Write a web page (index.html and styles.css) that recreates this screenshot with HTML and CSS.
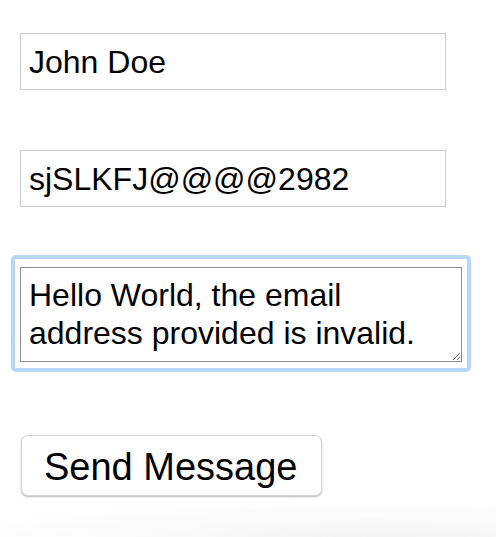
FILE: index.html
```html
<!DOCTYPE html>
<html lang="en">
<head>
<meta charset="utf-8">
<title>Contact form</title>
<link rel="stylesheet" href="styles.css">
</head>
<body>
<form class="contact-form">
  <input class="field" type="text" value="John Doe">
  <input class="field field-email" type="text" value="sjSLKFJ@@@@2982">
  <div class="focus-ring">
    <textarea class="message" rows="2">Hello World, the email address provided is invalid.</textarea>
  </div>
  <button class="send" type="button">Send Message</button>
</form>
<div class="window-shadow"></div>
</body>
</html>
```

FILE: styles.css
```css
html, body {
  margin: 0;
  padding: 0;
  background: #ffffff;
}

body {
  width: 496px;
  height: 537px;
  overflow: hidden;
  position: relative;
  font-family: "Liberation Sans", Arial, Helvetica, sans-serif;
  color: #000;
}

.contact-form {
  display: flex;
  flex-direction: column;
  align-items: flex-start;
  padding: 33px 0 0 11px;
}

.field {
  box-sizing: border-box;
  width: 426px;
  height: 57px;
  margin: 0 0 0 9px;
  padding: 2px 7px 0 8px;
  border: 1px solid #cccccc;
  border-radius: 0;
  background: #fff;
  font-family: inherit;
  font-size: 32px;
  color: #000;
  outline: none;
}

.field + .field {
  margin-top: 60px;
}

.focus-ring {
  margin-top: 48px;
  padding: 8px 5px 6px 5px;
  border: 4px solid #b6d6fb;
  border-radius: 5px;
  display: flex;
}

.message {
  box-sizing: border-box;
  width: 442px;
  height: 95px;
  margin: 0;
  padding: 8px 8px 9px 8px;
  border: 1px solid #8c8c8c;
  border-radius: 0;
  font-family: inherit;
  font-size: 32px;
  line-height: 38px;
  color: #000;
  resize: both;
  overflow: hidden;
  outline: none;
}

.send {
  margin: 63px 0 0 10px;
  padding: 10px 23px 6px 22px;
  border: 1px solid #d4d4d4;
  border-radius: 7px;
  background: #ffffff;
  box-shadow: 0 1px 2px rgba(0, 0, 0, 0.28);
  font-family: inherit;
  font-size: 38px;
  line-height: normal;
  color: #000;
}

.window-shadow {
  position: absolute;
  left: 0;
  right: 0;
  bottom: 0;
  height: 40px;
  background: radial-gradient(ellipse 420px 36px at 75% 100%, rgba(0, 0, 0, 0.045), rgba(0, 0, 0, 0));
  pointer-events: none;
}
```
